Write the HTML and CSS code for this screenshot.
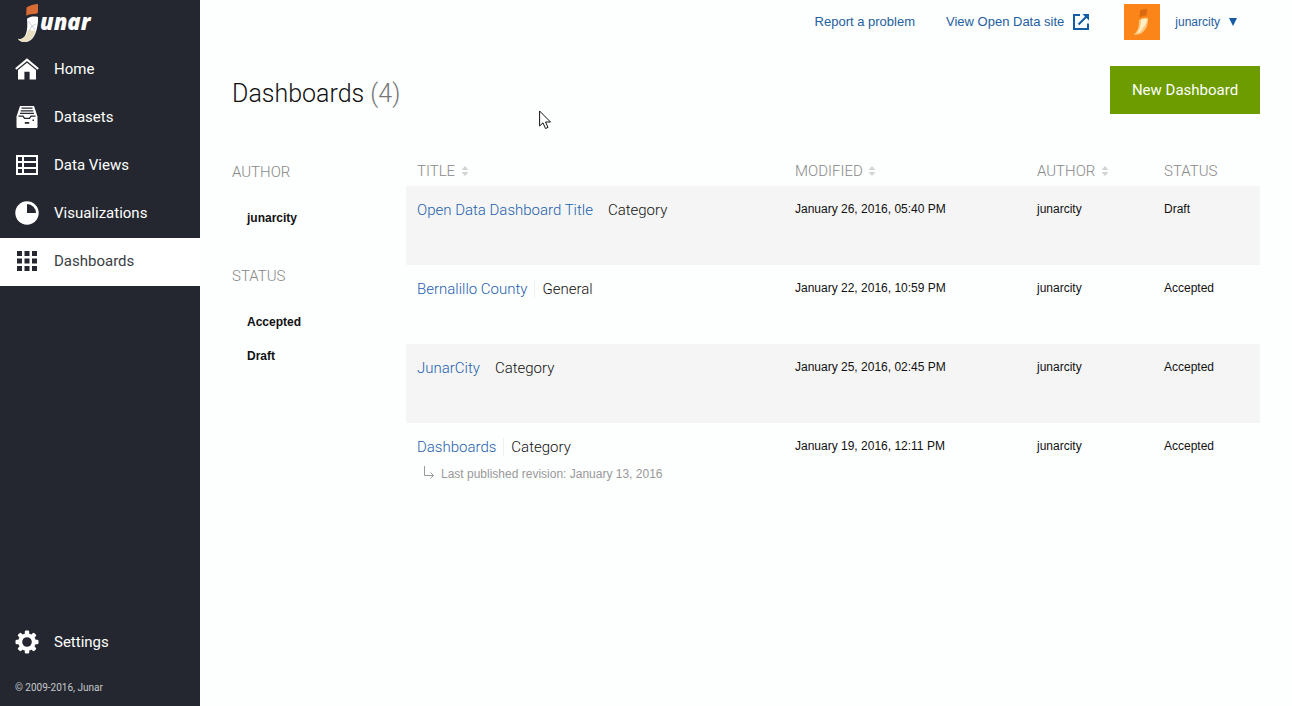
FILE: index.html
```html
<!DOCTYPE html>
<html lang="en">
<head>
<meta charset="utf-8">
<title>Dashboards - Junar</title>
<link rel="stylesheet" href="styles.css">
</head>
<body>
<div class="app">
  <aside class="sidebar">
    <a class="logo" href="#" aria-label="Junar">
      <svg class="logo-mark" width="22" height="40" viewBox="0 0 22 40" aria-hidden="true">
        <path fill="#d86c35" d="M8.500 3.500 C12 1 16 .2 20 0 L20 7 C20 9 19.500 9.600 18 9.800 C14.500 10 11 10.300 8.200 11.800 Z"/>
        <path fill="#fff" d="M9 14.800 C12 12.500 16 12.300 20 12.900 C20.500 21 18 33 12 36.500 C8 39 2 38.500 0 34.800 C6 36 10.500 31 9 14.800 Z"/>
        <path fill="#e9dfc0" d="M0 34.800 C5 36.500 9 31.500 10 26 L17.500 27 C16 32 13.500 36 10 37.200 C6 38.700 1.500 37.800 0 34.800 Z"/>
        <path fill="none" stroke="#b9bcc4" stroke-width=".7" d="M10 17 L14 22 L18 20 M14 22 L11 27 M14 22 L17 26"/>
      </svg>
      <span class="logo-text">unar</span>
    </a>
    <nav class="nav">
      <a class="nav-item" href="#">
        <svg width="24" height="24" viewBox="0 0 24 24" aria-hidden="true"><path fill="none" stroke="#fff" stroke-width="2.200" d="M.8 12 L12 2.700 L23.200 12"/><path fill="#fff" d="M12 5.800 L21 13 V22.500 H14.600 V14.800 H9.400 V22.500 H3 V13 Z"/></svg>
        Home
      </a>
      <a class="nav-item" href="#">
        <svg width="24" height="24" viewBox="0 0 24 24" aria-hidden="true"><path fill="#fff" d="M5 1 H19 L22.500 11.500 V22 Q22.500 23 21.500 23 H2.500 Q1.500 23 1.500 22 V11.500 Z"/><path fill="none" stroke="#24272f" stroke-width="1.300" d="M6.500 3.200 H17.500 M5.800 5.800 H18.200 M5 8.400 H19 M3.500 11.200 H8 L9.500 13.300 H14.500 L16 11.200 H20.500"/><path fill="#24272f" d="M9.800 17 H14.200 V18.800 H9.800 Z M17.500 14.500 H19 V16 H17.500 Z"/></svg>
        Datasets
      </a>
      <a class="nav-item" href="#">
        <svg width="24" height="24" viewBox="0 0 24 24" aria-hidden="true"><path fill="none" stroke="#fff" stroke-width="2" d="M2 3 H22 V21 H2 Z M8 3 V21 M2 9 H22 M2 15 H22"/></svg>
        Data Views
      </a>
      <a class="nav-item" href="#">
        <svg width="24" height="24" viewBox="0 0 24 24" aria-hidden="true"><circle cx="12" cy="12" r="11.700" fill="#fff"/><path fill="#24272f" d="M12 3 A9 9 0 0 1 21 12 H12 Z"/></svg>
        Visualizations
      </a>
      <a class="nav-item nav-item-active" href="#" aria-current="page">
        <svg width="24" height="24" viewBox="0 0 24 24" aria-hidden="true"><path fill="#24272f" d="M2 2h5v5H2z M9.500 2h5v5h-5z M17 2h5v5h-5z M2 9.500h5v5H2z M9.500 9.500h5v5h-5z M17 9.500h5v5h-5z M2 17h5v5H2z M9.500 17h5v5h-5z M17 17h5v5h-5z"/></svg>
        Dashboards
      </a>
    </nav>
    <div class="sidebar-foot">
      <a class="nav-item" href="#">
        <svg width="24" height="24" viewBox="0 0 24 24" aria-hidden="true"><circle cx="12" cy="12" r="6.800" fill="none" stroke="#fff" stroke-width="4"/><g fill="#fff"><path id="tooth" d="M9.800 4.500 V1.800 Q9.800 .5 11 .5 H13 Q14.200 .5 14.200 1.800 V4.500 Z"/><use href="#tooth" transform="rotate(45 12 12)"/><use href="#tooth" transform="rotate(90 12 12)"/><use href="#tooth" transform="rotate(135 12 12)"/><use href="#tooth" transform="rotate(180 12 12)"/><use href="#tooth" transform="rotate(225 12 12)"/><use href="#tooth" transform="rotate(270 12 12)"/><use href="#tooth" transform="rotate(315 12 12)"/></g></svg>
        Settings
      </a>
      <p class="copyright">© 2009-2016, Junar</p>
    </div>
  </aside>

  <main class="main">
    <header class="topbar">
      <a class="top-link" href="#">Report a problem</a>
      <a class="top-link site-link" href="#">View Open Data site
        <svg width="18" height="18" viewBox="0 0 18 18" aria-hidden="true"><path fill="none" stroke="#145ca4" stroke-width="2" d="M8 2 H2 V16 H16 V10.500 M6.500 11.500 L15 3"/><path fill="#145ca4" d="M10.500 1 H17 V7.500 Z"/></svg>
      </a>
      <button class="user" type="button">
        <svg class="avatar" width="36" height="36" viewBox="0 0 36 36" aria-hidden="true"><path fill="#fb8518" d="M0 0h36v36H0z"/><path fill="#d96a10" d="M16 6.500 Q19 4.500 23 5 L22.500 11.500 Q18.500 11 15.500 13.500 Z"/><path fill="#fcc77c" d="M15 16 Q19 13 24 14 Q24.500 24 18 29 Q14 31.500 9.500 30.500 Q15.500 27 15 16 Z"/><path fill="#fff0c8" d="M17 16 Q20 14 23 15 Q22.500 21 19 23.500 Q17 28 13 29.500 Q17.500 23 17 16 Z"/></svg>
        <span>junarcity</span>
        <svg width="10" height="8" viewBox="0 0 10 8" aria-hidden="true"><path fill="#145ca4" d="M1 0 H9 L5 8 Z"/></svg>
      </button>
    </header>

    <div class="heading">
      <h1 class="title">Dashboards <span class="count">(4)</span></h1>
      <button class="new-button" type="button">New Dashboard</button>
    </div>

    <div class="content">
      <section class="filters" aria-label="Filters">
        <h2 class="filter-title">AUTHOR</h2>
        <ul class="filter-list"><li><a href="#">junarcity</a></li></ul>
        <h2 class="filter-title">STATUS</h2>
        <ul class="filter-list"><li><a href="#">Accepted</a></li><li><a href="#">Draft</a></li></ul>
      </section>
      <table class="grid">
        <colgroup><col><col class="col-modified"><col class="col-author"><col class="col-status"></colgroup>
        <thead>
          <tr>
            <th scope="col">TITLE <svg class="sort" width="8" height="10" viewBox="0 0 8 10" aria-hidden="true"><path d="M4 0 L7.500 4 H.5 Z M.5 6 H7.500 L4 10 Z"/></svg></th>
            <th scope="col">MODIFIED <svg class="sort" width="8" height="10" viewBox="0 0 8 10" aria-hidden="true"><path d="M4 0 L7.500 4 H.5 Z M.5 6 H7.500 L4 10 Z"/></svg></th>
            <th scope="col">AUTHOR <svg class="sort" width="8" height="10" viewBox="0 0 8 10" aria-hidden="true"><path d="M4 0 L7.500 4 H.5 Z M.5 6 H7.500 L4 10 Z"/></svg></th>
            <th scope="col">STATUS</th>
          </tr>
        </thead>
        <tbody>
          <tr>
            <td><div class="name"><a href="#">Open Data Dashboard Title</a><span class="category">Category</span></div></td>
            <td>January 26, 2016, 05:40 PM</td><td>junarcity</td><td>Draft</td>
          </tr>
          <tr>
            <td><div class="name"><a href="#">Bernalillo County</a><span class="category">General</span></div></td>
            <td>January 22, 2016, 10:59 PM</td><td>junarcity</td><td>Accepted</td>
          </tr>
          <tr>
            <td><div class="name"><a href="#">JunarCity</a><span class="category">Category</span></div></td>
            <td>January 25, 2016, 02:45 PM</td><td>junarcity</td><td>Accepted</td>
          </tr>
          <tr>
            <td><div class="name"><a href="#">Dashboards</a><span class="category">Category</span></div>
              <div class="revision"><svg width="12" height="14" viewBox="0 0 12 14" aria-hidden="true"><path fill="none" stroke="#999" d="M1.500 0 V9.500 H10.500 M7.500 6.500 L10.500 9.500 L7.500 12.500"/></svg>Last published revision: January 13, 2016</div></td>
            <td>January 19, 2016, 12:11 PM</td><td>junarcity</td><td>Accepted</td>
          </tr>
        </tbody>
      </table>
    </div>
  </main>
</div>
<svg class="pointer" width="13" height="20" viewBox="0 0 13 20" aria-hidden="true"><path fill="#fff" stroke="#111" d="M.6 1 V16 L4 12.800 L6.500 18.500 L9 17.400 L6.500 12 H11.500 Z"/></svg>
</body>
</html>
```
FILE: styles.css
```css
* { box-sizing: border-box; }
body {
  margin: 0;
  background: #fdfefe;
  color: #111;
  font: 12px/16px "Liberation Sans", Arial, sans-serif;
}
h1, h2, p, ul { margin: 0; padding: 0; }
ul { list-style: none; }
a { text-decoration: none; }
button { border: 0; cursor: pointer; }
svg { flex: none; }

.app { display: flex; min-height: 100vh; }

.sidebar {
  display: flex;
  flex-direction: column;
  flex: none;
  width: 200px;
  background: #24272f;
}
.logo { display: flex; height: 46px; padding: 4px 18px 0; }
.logo-text {
  color: #fff;
  font: italic 800 22px/34px "Open Sans", sans-serif;
}
.nav-item {
  display: flex;
  align-items: center;
  gap: 15px;
  height: 48px;
  padding: 0 15px 2px;
  color: #fff;
  font: 15px/20px Roboto, sans-serif;
}
.nav-item-active { background: #fff; color: #3a3d44; }
.sidebar-foot { margin-top: auto; }
.copyright {
  padding: 13px 15px 11px;
  color: #c6c8cc;
  font: 10px/15px Roboto, sans-serif;
}

.main { flex: 1; min-width: 0; padding: 0 32px; }
.topbar { display: flex; align-items: center; justify-content: flex-end; height: 44px; }
.top-link { display: flex; align-items: center; gap: 8px; color: #24609f; font-size: 13px; }
.site-link { margin: 0 34px 0 31px; }
.user {
  display: flex;
  align-items: center;
  gap: 8px;
  padding: 0 22px 0 0;
  background: none;
  color: #24609f;
  font: inherit;
}
.avatar { margin-right: 7px; }

.heading { display: flex; align-items: center; justify-content: space-between; padding-top: 22px; }
.title { padding-top: 8px; font: 300 25px/32px Roboto, sans-serif; }
.count { color: #777; }
.new-button {
  width: 150px;
  height: 48px;
  background: #6c9c00;
  color: #fff;
  font: 15px/20px Roboto, sans-serif;
}

.content { display: flex; padding-top: 41px; }
.filters { flex: none; width: 174px; }
.filter-title { padding: 7px 0; color: #888; font: 300 15px/20px Roboto, sans-serif; }
.filter-list { padding: 21px 15px 33px; }
.filter-list li + li { padding-top: 18px; }
.filter-list a { color: #111; font-weight: 700; }

.grid { flex: 1; border-collapse: collapse; table-layout: fixed; }
.col-modified { width: 242px; }
.col-author { width: 127px; }
.col-status { width: 107px; }
.grid th {
  height: 31px;
  padding: 0 11px;
  color: #888;
  font: 300 15px/20px Roboto, sans-serif;
  text-align: left;
}
.sort { margin-left: 2px; fill: #d4d4d4; }
.grid td { height: 79px; padding: 15px 11px 0; vertical-align: top; }
.grid tbody tr:nth-child(odd) { background: #f5f5f5; }
.name { display: flex; align-items: center; font: 300 15px/18px Roboto, sans-serif; }
.name a { color: #1d5fae; }
.category { margin-left: 7px; padding-left: 7px; border-left: 1px solid #f0f0f0; }
.grid tbody tr:nth-child(odd) .category { border-color: #f5f5f5; }
.revision { display: flex; gap: 6px; padding: 10px 0 0 6px; color: #999; }

/* mouse pointer floating above the page */
.pointer { position: absolute; left: 539px; top: 110px; }
```
